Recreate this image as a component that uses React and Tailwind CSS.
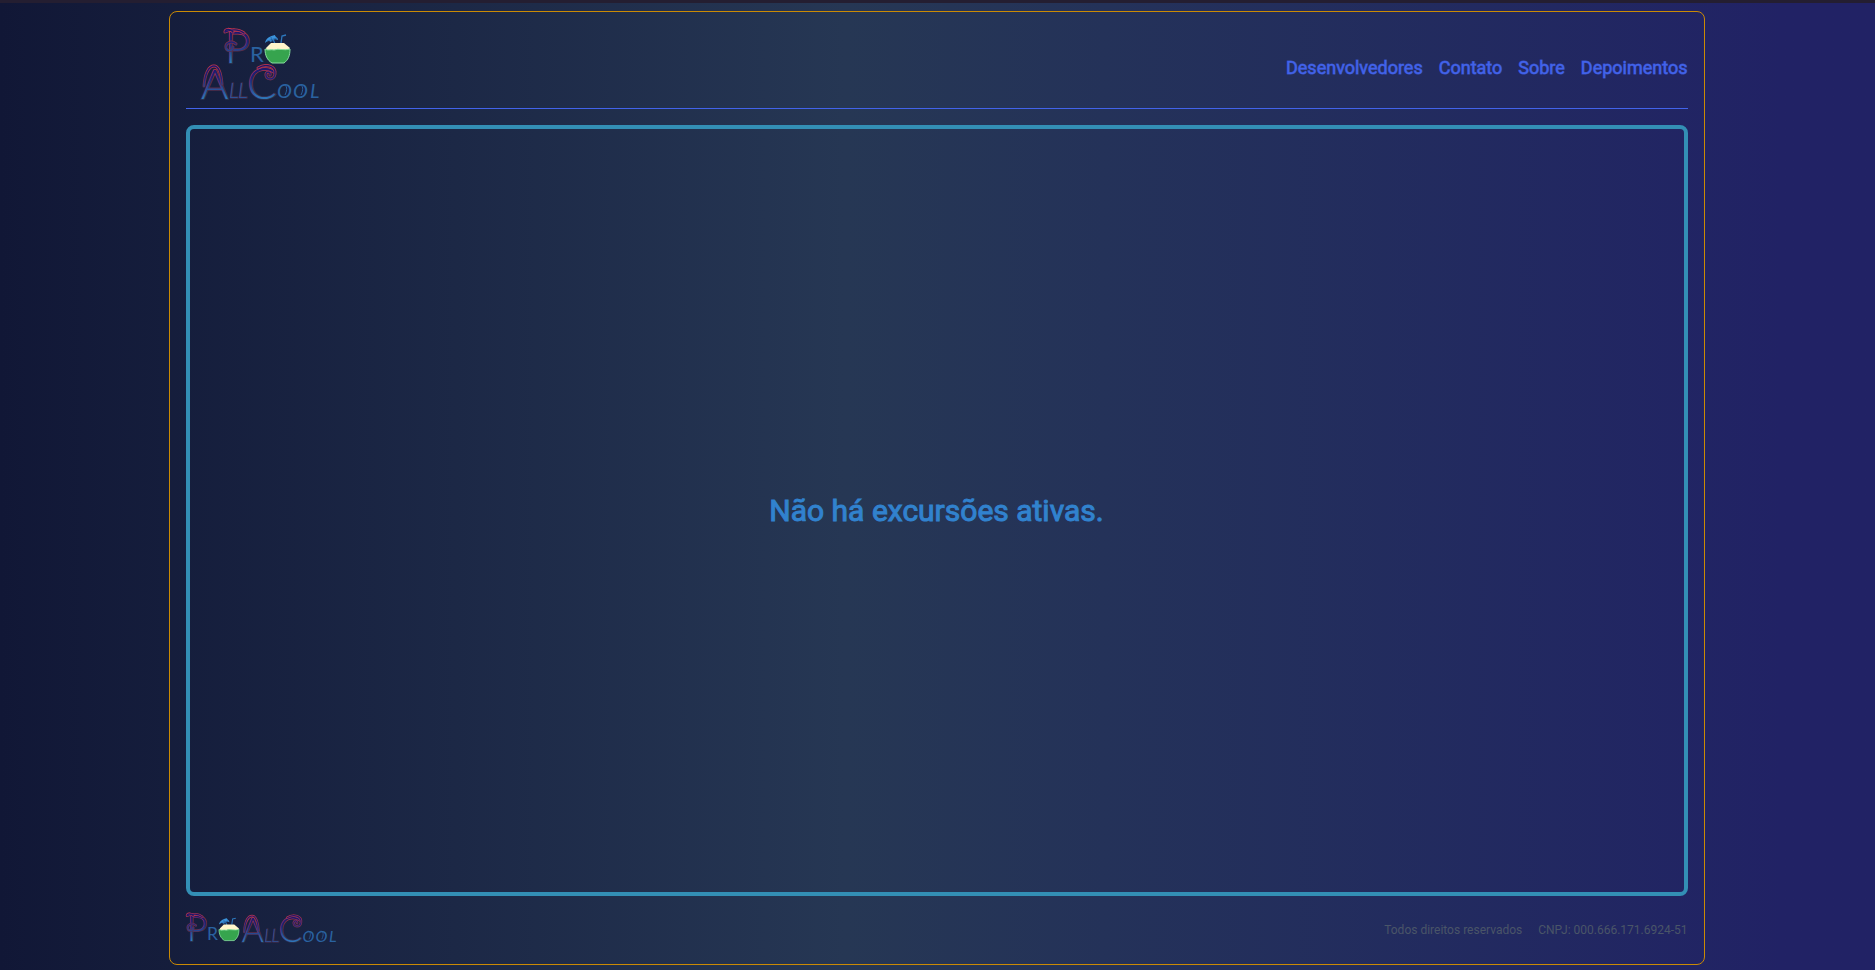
const navLinks = ["Desenvolvedores", "Contato", "Sobre", "Depoimentos"];

function Gradients({ id, top }) {
  return (
    <defs>
      <linearGradient id={`${id}-edge`} gradientUnits="userSpaceOnUse" x1="0" y1={top} x2="0" y2={top + 35}>
        <stop offset="0" stopColor="#d0374c" />
        <stop offset="0.4" stopColor="#7c2f4c" />
        <stop offset="0.8" stopColor="#472c4a" />
        <stop offset="1" stopColor="#2c3554" />
      </linearGradient>
      <linearGradient id={`${id}-ink`} gradientUnits="userSpaceOnUse" x1="0" y1={top} x2="0" y2={top + 35}>
        <stop offset="0" stopColor="#1c1468" />
        <stop offset="0.4" stopColor="#1e2378" />
        <stop offset="0.7" stopColor="#284c94" />
        <stop offset="1" stopColor="#2f79bb" />
      </linearGradient>
    </defs>
  );
}

function Flourish({ id, d }) {
  return (
    <g fill="none" strokeLinecap="round" strokeLinejoin="round">
      <path d={d} stroke={`url(#${id}-edge)`} strokeWidth="3" />
      <path d={d} stroke={`url(#${id}-ink)`} strokeWidth="1.4" />
    </g>
  );
}

function Coconut() {
  return (
    <g>
      <path d="M1 8 C2 3 6 1 11 0 C11 2 14 2 14 5 C11 3 8 5 7 7 C5 5 3 6 1 8Z" fill="#3b93db" />
      <path d="M3 6 L13 3 M7 2 L8 7" stroke="#205b9f" strokeWidth="0.7" />
      <path d="M9 4 L11 9 M17 8 L18 1 L22 0" fill="none" stroke="#2d78bd" strokeWidth="1.3" />
      <path d="M2 13 L7 8 H20 L26 13 L24 16 H3Z" fill="#fff6cb" />
      <path d="M1 14 C4 16 7 14 10 15 C15 13 20 16 26 14 C26 21 24 25 20 28 H8 C3 25 1 20 1 14Z" fill="#36a44e" stroke="#88dfa0" strokeWidth="1" />
    </g>
  );
}

function Pro({ id }) {
  return (
    <g>
      <Gradients id={id} top={2} />
      <text x="25" y="37" fontSize="44" fill={`url(#${id}-ink)`} stroke={`url(#${id}-edge)`} strokeWidth="1.6" paintOrder="stroke">P</text>
      <text x="50" y="36" fontSize="22" fontWeight="400" fill="#2a62a0">R</text>
      <Flourish id={id} d="M33 6 C30 2 25 3 25 6 C31 3 39 3 44 7 M36 18 C31 14 25 17 26 22 C27 26 33 25 33 21" />
      <g transform="translate(64 9)">
        <Coconut />
      </g>
    </g>
  );
}

function AllCool({ id }) {
  return (
    <g>
      <Gradients id={id} top={38} />
      <text x="1" y="73" fontSize="42" fill={`url(#${id}-ink)`} stroke={`url(#${id}-edge)`} strokeWidth="1.6" paintOrder="stroke">A</text>
      <text x="29 38" y="72" fontSize="21" fontStyle="italic" fill="#2b5296" stroke="#4c2e4e" strokeWidth="1" paintOrder="stroke">LL</text>
      <text x="47" y="73" fontSize="44" fill={`url(#${id}-ink)`} stroke={`url(#${id}-edge)`} strokeWidth="1.6" paintOrder="stroke">C</text>
      <text x="77 93 110" y="72" fontSize="20" fontStyle="italic" fontWeight="400" fill="#2a62a0">OOL</text>
      <Flourish id={id} d="M4 60 C5 47 9 40 14 40 C19 40 21 47 22 58" />
      <Flourish id={id} d="M58 42 C66 37 76 40 75 48 C74 55 65 54 66 48 C67 45 71 46 70 49" />
      <path d="M82 60 C85 57 89 61 85 69 M98 60 C101 57 105 61 101 69" fill="none" stroke="#2a62a0" strokeWidth="1" />
    </g>
  );
}

function StackedLogo() {
  return (
    <svg className="h-20 w-[124px] overflow-visible" viewBox="0 2 124 80" fontFamily="Lato, sans-serif" fontWeight="300" role="img" aria-label="Pro AllCool">
      <Pro id="stacked-pro" />
      <AllCool id="stacked-all" />
    </svg>
  );
}

function InlineLogo() {
  return (
    <svg className="h-9 w-[152px] overflow-visible" viewBox="0 0 152 36" fontFamily="Lato, sans-serif" fontWeight="300" role="img" aria-label="Pro AllCool">
      <g transform="translate(-19 -1) scale(0.8)">
        <Pro id="inline-pro" />
      </g>
      <g transform="translate(55 -28) scale(0.8)">
        <AllCool id="inline-all" />
      </g>
    </svg>
  );
}

export default function App() {
  return (
    <div className="flex min-h-screen flex-col border-t-3 border-[#241e31] bg-linear-to-r from-[#111736] via-[#263754] via-45% to-[#212265] to-95% pt-2 pr-[18px] pb-[5px] pl-4 font-[Roboto,sans-serif]">
      <div className="mx-auto flex w-full max-w-screen-2xl flex-1 flex-col rounded-lg border border-[#ca8a04] px-4 pt-4">
        <header className="flex items-center justify-between border-b border-[#4263eb]">
          <a href="#inicio" className="pl-[14px]">
            <StackedLogo />
          </a>
          <nav className="flex gap-4 text-lg text-[#4263eb] [-webkit-text-stroke:1px_#4263ebaa]">
            {navLinks.map((label) => (
              <a key={label} href={`#${label.toLowerCase()}`}>
                {label}
              </a>
            ))}
          </nav>
        </header>
        <main className="mt-4 flex flex-1 items-center justify-center rounded-lg border-4 border-[#338fb5]">
          <h1 className="text-3xl text-[#3182ce] [-webkit-text-stroke:1px_#3182ce]">Não há excursões ativas.</h1>
        </main>
        <footer className="flex h-[68px] items-center justify-between">
          <InlineLogo />
          <div className="flex gap-4 text-xs text-[#4a5568]">
            <p>Todos direitos reservados</p>
            <p>CNPJ: 000.666.171.6924-51</p>
          </div>
        </footer>
      </div>
    </div>
  );
}
